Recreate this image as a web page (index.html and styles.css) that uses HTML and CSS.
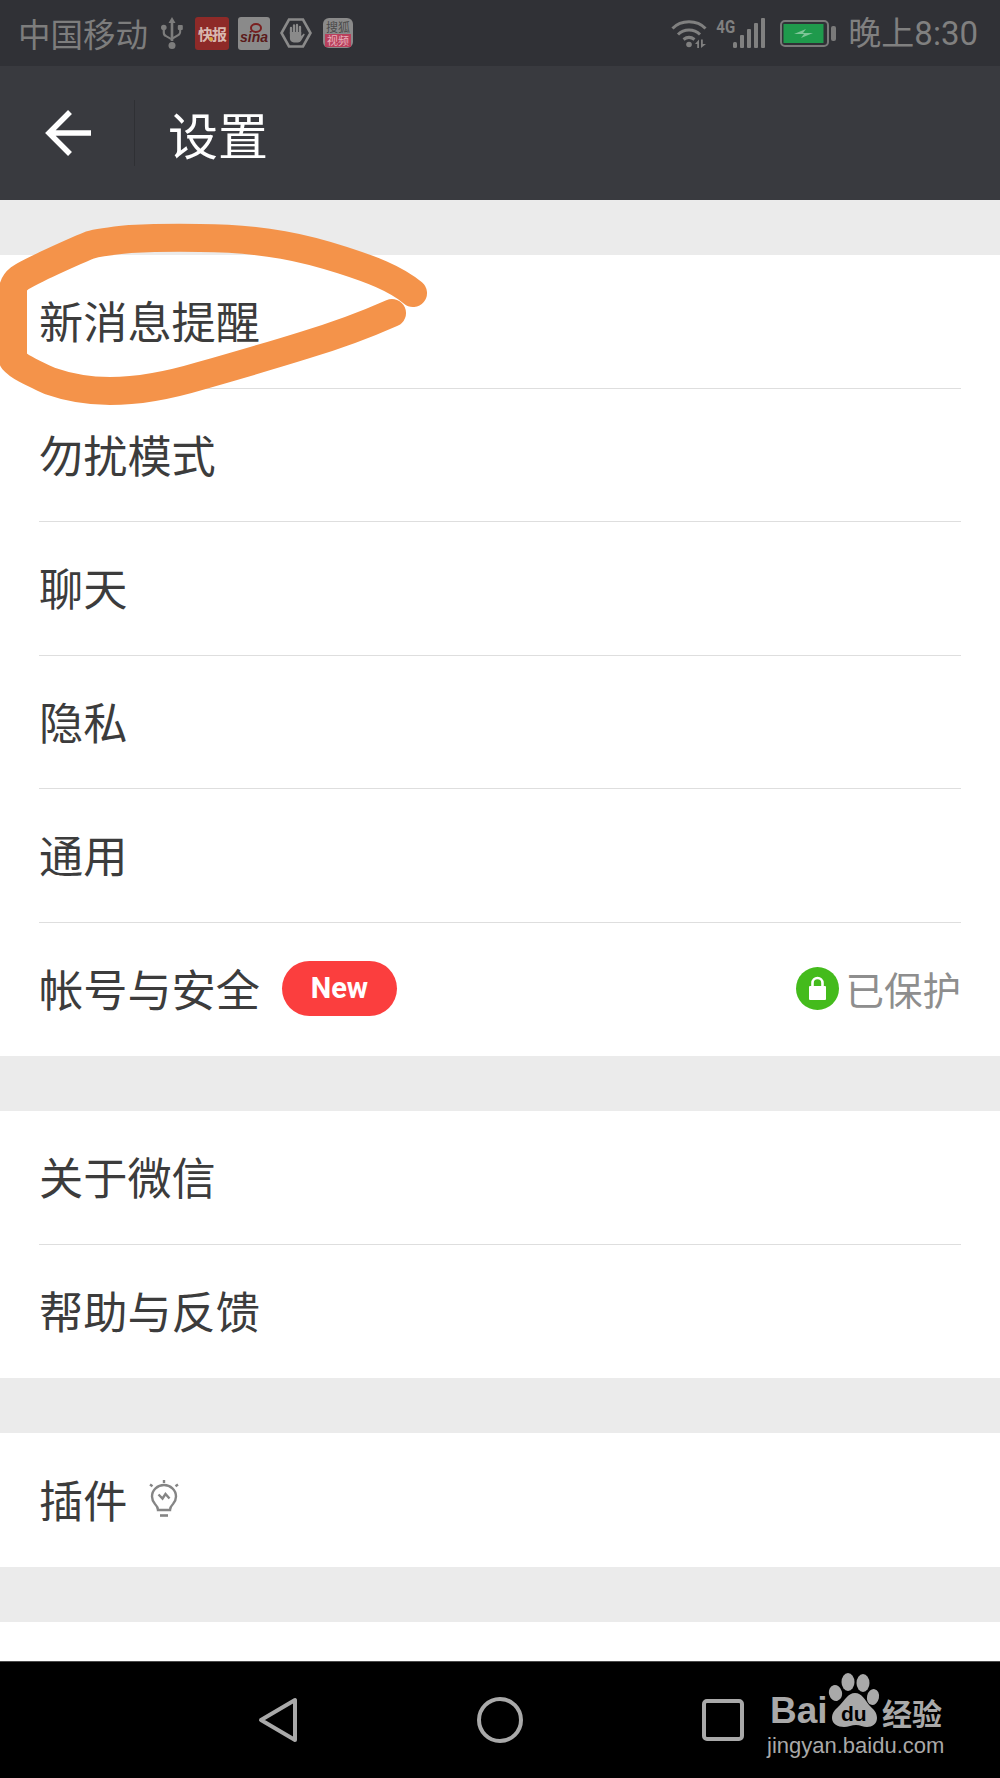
FILE: index.html
```html
<!DOCTYPE html>
<html lang="zh-CN">
<head>
  <meta charset="utf-8">
  <title>设置</title>
  <link rel="stylesheet" href="styles.css">
</head>
<body>
<div class="phone">

  <!-- status bar -->
  <header class="status">
    <span class="carrier">中国移动</span>
    <svg class="usb" width="22" height="32" viewBox="0 0 22 32" fill="#7d7d7d">
      <path d="M11 0l3.500 6h-2.200v18h-2.600V6H7.500z"/>
      <circle cx="11" cy="28.500" r="3.500"/>
      <circle cx="2.800" cy="10.500" r="2.800"/>
      <rect x="16.800" y="8" width="5" height="5" rx="1"/>
      <path d="M1.700 12h2.200v3.500c0 1.400.8 2.200 2 2.900l4 2.300v2.400l-5.200-3C2.800 19.500 1.700 17.900 1.700 15.500zM18 12h2.200v2.500c0 2.200-1 3.700-2.900 4.800l-5.500 3.200v-2.400l4.400-2.500c1.300-.8 2-1.600 2-3.100z"/>
    </svg>
    <span class="app app-kb">快报</span>
    <span class="app app-sina">sina</span>
    <svg class="hand" width="32" height="30" viewBox="0 0 32 30">
      <path d="M9 1.500h14L30.500 15 23 28.500H9L1.500 15z" fill="none" stroke="#8a8a8a" stroke-width="2.600"/>
      <path d="M11 10v6M14 7.500V15M17 7V15M20 9v7" fill="none" stroke="#8a8a8a" stroke-width="2.300" stroke-linecap="round"/>
      <path d="M9.900 14h11.300v4l2.600-2.400 1 1-3.600 6c-.8 1.300-1.800 1.900-3.200 1.900h-4.200c-2.200 0-3.900-1.700-3.900-3.900z" fill="#8a8a8a"/>
    </svg>
    <span class="app app-sohu"><i>搜狐</i><b>视频</b></span>

    <span class="status-right">
      <svg class="wifi" width="37" height="29" viewBox="0 0 37 29" fill="none" stroke="#808080" stroke-width="3">
        <path d="M1.500 9.500C10 .5 26 .5 34.500 9.500M7 15.500c6-6 16-6 22 0M12.500 20.500c3.500-2.700 7.500-2.700 11 0"/>
        <circle cx="18" cy="25.500" r="2.800" fill="#808080" stroke="none"/>
        <path d="M24 25l4-4.500V29h-1.800v-4zM30 20.500h1.800v4.500H35l-5 4z" fill="#808080" stroke="none"/>
      </svg>
      <span class="net">4G</span>
      <svg class="signal" width="32" height="30" viewBox="0 0 32 30" fill="#808080">
        <rect x="0" y="24" width="4" height="6" rx="1.500"/>
        <rect x="7" y="17" width="4" height="13" rx="1"/>
        <rect x="14" y="11" width="4" height="19" rx="1"/>
        <rect x="21" y="5" width="4" height="25" rx="1"/>
        <rect x="28" y="0" width="4" height="30" rx="1"/>
      </svg>
      <svg class="battery" width="56" height="27" viewBox="0 0 56 27">
        <rect x="1" y="1" width="47" height="25" rx="4" fill="none" stroke="#7a7a7a" stroke-width="2"/>
        <rect x="3.500" y="4" width="40" height="19" fill="#1f9a4c"/>
        <path d="M14 14l12-5-3 4h10l-12 5 3-4z" fill="#7dc497"/>
        <rect x="51" y="6" width="5" height="15" rx="2" fill="#7a7a7a"/>
      </svg>
      <span class="clock">晚上8:30</span>
    </span>
  </header>

  <!-- toolbar -->
  <div class="toolbar">
    <svg class="back" width="46" height="46" viewBox="0 0 46 46" fill="none" stroke="#fff" stroke-width="5.500">
      <path d="M46 23H4M25 2L4 23l21 21"/>
    </svg>
    <span class="toolbar-line"></span>
    <h1>设置</h1>
  </div>

  <!-- settings list -->
  <main class="content">
    <ul class="group">
      <li class="row">新消息提醒</li>
      <li class="row">勿扰模式</li>
      <li class="row">聊天</li>
      <li class="row">隐私</li>
      <li class="row">通用</li>
      <li class="row">
        帐号与安全
        <span class="badge">New</span>
        <span class="guard">
          <svg width="43" height="43" viewBox="0 0 43 43">
            <circle cx="21.500" cy="21.500" r="21.500" fill="#44bb1c"/>
            <rect x="13" y="19" width="17" height="14" rx="1" fill="#fff"/>
            <path d="M16.500 20v-4a5 5 0 0 1 10 0v4" fill="none" stroke="#fff" stroke-width="2.600"/>
          </svg>
          已保护
        </span>
      </li>
    </ul>
    <ul class="group">
      <li class="row">关于微信</li>
      <li class="row">帮助与反馈</li>
    </ul>
    <ul class="group">
      <li class="row">
        插件
        <svg class="bulb" width="30" height="37" viewBox="0 0 30 37" fill="none" stroke="#858585" stroke-width="2.400">
          <path d="M9 30c0-3-1-4-3-6-2-2.300-3-4.500-3-7.500C3 10 8.500 5 15 5s12 5 12 11.500c0 3-1 5.200-3 7.500-2 2-3 3-3 6z"/>
          <path d="M9.500 14.500l4 4 3-4.500 4 4.500"/>
          <path d="M11 35.500h8" stroke-width="2.600"/>
          <path d="M15 0v3M1 4.500l2.500 1.800M29 4.500l-2.500 1.800"/>
        </svg>
      </li>
    </ul>
    <div class="group group-cut"></div>
  </main>

  <!-- android nav -->
  <nav class="navbar">
    <svg width="40" height="46" viewBox="0 0 40 46" fill="none" stroke="#a9a9a9" stroke-width="4" stroke-linejoin="round">
      <path d="M37 3v40L3 23z"/>
    </svg>
    <svg width="46" height="46" viewBox="0 0 46 46" fill="none" stroke="#a9a9a9" stroke-width="4">
      <circle cx="23" cy="23" r="21"/>
    </svg>
    <svg width="42" height="42" viewBox="0 0 42 42" fill="none" stroke="#a9a9a9" stroke-width="4">
      <rect x="2" y="2" width="38" height="38" rx="3"/>
    </svg>
  </nav>

  <!-- orange marker scribble -->
  <svg class="scribble" width="440" height="210" viewBox="0 0 440 210" fill="none" stroke="#f4934a" stroke-width="28" stroke-linecap="round" stroke-linejoin="round">
    <path d="M413 73C395 58 370 49 342 40 320 33 300 28 283 25 255 20 230 18 200 18 175 17.500 150 18 130 19 110 21 100 22 90 25 75 31 60 38 45 45 35 50 28 53 20 58 15 62 13 65 13 70L13 140C20 148 35 154 50 161 70 168 90 171 110 171 140 171 170 165 200 156 235 146 270 136 305 125 335 116 365 105 392 93"/>
  </svg>

  <!-- watermark -->
  <div class="watermark">
    <div class="wm-top">
      <span class="wm-bai">Bai</span>
      <svg class="wm-paw" width="54" height="57" viewBox="0 0 54 57" fill="#a9a9a9">
        <ellipse cx="7.500" cy="21" rx="6.500" ry="8" transform="rotate(-15 7.500 21)"/>
        <ellipse cx="20" cy="10" rx="6.500" ry="9"/>
        <ellipse cx="35" cy="11" rx="6.500" ry="9"/>
        <ellipse cx="45" cy="25" rx="6" ry="8" transform="rotate(12 45 25)"/>
        <path d="M27 21c7 0 10 7 14 12 4 4 8 7 8 13 0 6-5 9-10 9-4 0-7-2-11-2s-8 2-12 2c-6 0-12-3-12-9 0-6 4-9 8-13 5-5 8-12 15-12z"/>
      </svg>
      <span class="wm-du">du</span>
      <span class="wm-jy">经验</span>
    </div>
    <div class="wm-url">jingyan.baidu.com</div>
  </div>

</div>
</body>
</html>
```

FILE: styles.css
```css
* {box-sizing:border-box}
html,body {margin:0;padding:0}
body {font-family:"Noto Sans CJK SC","Noto Sans",sans-serif;background:#ebebeb}

.phone {position:relative;width:1000px;height:1778px;overflow:hidden;
        display:flex;flex-direction:column}

/* status bar */
.status {height:66px;flex:none;background:#303136;color:#7d7d7d;
         display:flex;align-items:center;padding:0 22px 0 18px}
.carrier {font-size:32.500px;margin-right:13px;line-height:1}
.usb {margin-right:12px;flex:none}
.app {position:relative;height:33px;border-radius:3px;overflow:hidden;
      display:flex;align-items:center;justify-content:center;flex:none}
.app-kb {width:34px;margin-right:9px;background:#8e2a28;color:#d9b8b0;font-size:15px;font-weight:700;letter-spacing:-1px}
.app-kb::after {content:"";position:absolute;left:14px;top:20px;width:4px;height:4px;border-radius:50%;background:#d9a93a}
.app-sina {width:32px;margin-right:10px;padding-top:8px;background:#8a8a8a;color:#5a1a1a;font:italic 700 14px "Liberation Sans",sans-serif}
.app-sina::before {content:"";position:absolute;left:12px;top:6px;width:8px;height:6px;border-radius:50%;border:2px solid #7a2020}
.hand {margin-right:11px;flex:none}
.app-sohu {width:30px;height:30px;border-radius:6px;background:#8a8a8a;flex-direction:column}
.app-sohu i {font-style:normal;font-size:12px;line-height:14px;color:#4a4a4a}
.app-sohu b {font-weight:400;font-size:11px;line-height:13px;color:#e8b0bc;background:#b8405c;padding:0 2px}

.status-right {margin-left:auto;display:flex;align-items:center;color:#808080}
.wifi {margin-right:8px}
.net {font:700 15px/1 "Roboto",sans-serif;transform:scaleY(1.2);align-self:flex-start;margin:3px 0 0;width:17px}
.signal {margin-right:15px}
.battery {margin-right:12px}
.clock {font:33px/1 "Roboto","Noto Sans CJK SC",sans-serif}

/* toolbar */
.toolbar {height:134px;flex:none;background:#393a3f;display:flex;align-items:center;padding-left:45px}
.toolbar-line {width:1px;height:66px;background:#2f3034;margin:0 33px 0 43px}
.toolbar h1 {margin:0;color:#fff;font-size:50px;font-weight:400;line-height:1}

/* list */
.content {flex:1;background:#ebebeb;padding-top:55px;display:flex;flex-direction:column;gap:55px}
.group {list-style:none;margin:0;padding:0;background:#fff}
.row {height:133.500px;margin-left:39px;margin-right:39px;padding-bottom:2px;display:flex;align-items:center;
      font-size:44.200px;color:#3c3c3c;border-bottom:1px solid #dedede}
.row:last-child {border-bottom:0}
.group-cut {flex:1}

.badge {margin-left:22px;width:115px;height:55px;border-radius:28px;background:#fb3e3e;color:#fff;
        font:700 29px/55px "Roboto",sans-serif;text-align:center}
.guard {margin-left:auto;display:flex;align-items:center;gap:6px;font-size:38.500px;color:#8e8e8e}
.bulb {margin-left:22px}

/* nav */
.navbar {height:117px;flex:none;background:#000;border-top:1px solid #4a4a4a;
         display:flex;align-items:center;gap:179px;padding:0 0 0 258px}

/* overlays */
.scribble {position:absolute;left:0;top:220px}
.watermark {position:absolute;left:767px;top:1672px;width:180px;color:#a9a9a9}
.wm-top {height:58px;position:relative}
.wm-bai {position:absolute;left:3px;top:20px;font:700 37px/1 "Liberation Sans",sans-serif}
.wm-paw {position:absolute;left:61px;top:0}
.wm-du {position:absolute;left:74px;top:31px;font:700 21px/1 "Liberation Sans",sans-serif;color:#000}
.wm-jy {position:absolute;left:115px;top:25px;font-size:30px;font-weight:700;line-height:1}
.wm-url {font:22px/1 "Liberation Sans",sans-serif;margin-top:5px;white-space:nowrap}
```
